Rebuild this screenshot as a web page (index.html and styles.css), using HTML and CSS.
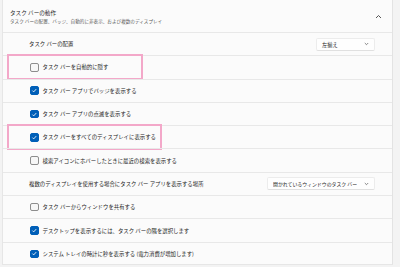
FILE: index.html
```html
<!DOCTYPE html>
<html lang="ja">
<head>
<meta charset="utf-8">
<link rel="stylesheet" href="styles.css">
</head>
<body>
<div class="panel">
  <div class="header">
    <div class="htext">
      <div class="title">タスク バーの動作</div>
      <div class="subtitle">タスク バーの配置、バッジ、自動的に非表示、および複数のディスプレイ</div>
    </div>
    <svg class="chev-up" width="7" height="5" viewBox="0 0 7 5"><path d="M1 4 L3.5 1.5 L6 4" fill="none" stroke="#444" stroke-width="0.9"/></svg>
  </div>
  <div class="row plain">
    <span class="label">タスク バーの配置</span>
    <div class="select s1"><span>左揃え</span><svg width="5" height="4" viewBox="0 0 5 4"><path d="M0.8 1 L2.5 2.7 L4.2 1" fill="none" stroke="#555" stroke-width="0.7"/></svg></div>
  </div>
  <div class="row">
    <span class="hl hl1"></span>
    <span class="cb"></span><span class="label">タスク バーを自動的に隠す</span>
  </div>
  <div class="row">
    <span class="cb on"><svg width="7" height="7" viewBox="0 0 7 7"><path d="M1.5 3.6 L2.9 5 L5.6 2" fill="none" stroke="#fff" stroke-width="0.9"/></svg></span><span class="label">タスク バー アプリでバッジを表示する</span>
  </div>
  <div class="row">
    <span class="cb on"><svg width="7" height="7" viewBox="0 0 7 7"><path d="M1.5 3.6 L2.9 5 L5.6 2" fill="none" stroke="#fff" stroke-width="0.9"/></svg></span><span class="label">タスク バー アプリの点滅を表示する</span>
  </div>
  <div class="row">
    <span class="hl hl2"></span>
    <span class="cb on"><svg width="7" height="7" viewBox="0 0 7 7"><path d="M1.5 3.6 L2.9 5 L5.6 2" fill="none" stroke="#fff" stroke-width="0.9"/></svg></span><span class="label">タスク バーをすべてのディスプレイに表示する</span>
  </div>
  <div class="row">
    <span class="cb"></span><span class="label">検索アイコンにホバーしたときに最近の検索を表示する</span>
  </div>
  <div class="row plain">
    <span class="label">複数のディスプレイを使用する場合にタスク バー アプリを表示する場所</span>
    <div class="select s2"><span class="stext">開かれているウィンドウのタスク バー</span><svg width="5" height="4" viewBox="0 0 5 4"><path d="M0.8 1 L2.5 2.7 L4.2 1" fill="none" stroke="#555" stroke-width="0.7"/></svg></div>
  </div>
  <div class="row">
    <span class="cb"></span><span class="label">タスク バーからウィンドウを共有する</span>
  </div>
  <div class="row">
    <span class="cb on"><svg width="7" height="7" viewBox="0 0 7 7"><path d="M1.5 3.6 L2.9 5 L5.6 2" fill="none" stroke="#fff" stroke-width="0.9"/></svg></span><span class="label">デスクトップを表示するには、タスク バーの隅を選択します</span>
  </div>
  <div class="row">
    <span class="cb on"><svg width="7" height="7" viewBox="0 0 7 7"><path d="M1.5 3.6 L2.9 5 L5.6 2" fill="none" stroke="#fff" stroke-width="0.9"/></svg></span><span class="label">システム トレイの時計に秒を表示する (電力消費が増加します)</span>
  </div>
</div>
</body>
</html>
```

FILE: styles.css
```css
html, body {
  margin: 0;
  padding: 0;
  background: #f3f3f3;
  width: 400px;
  height: 267px;
  overflow: hidden;
  font-family: "Noto Sans CJK JP", "Noto Sans", sans-serif;
  color: #1b1b1b;
}
.panel {
  margin-left: 2px;
  width: 391px;
  height: 265px;
  background: #fbfbfb;
  border-left: 1px solid #e6e6e6;
  border-right: 1px solid #e3e3e3;
  border-bottom: 1px solid #e6e6e6;
  box-sizing: border-box;
}
.header {
  height: 32px;
  display: flex;
  align-items: center;
  justify-content: space-between;
  padding: 0 10px 0 7px;
  box-sizing: border-box;
}
.htext {
  display: flex;
  flex-direction: column;
  gap: 1px;
  padding-top: 1px;
}
.title {
  font-size: 5.6px;
  line-height: 8px;
}
.subtitle {
  font-size: 4.6px;
  line-height: 6px;
  color: #5c5c5c;
}
.chev-up {
  margin-top: 1px;
}
.row {
  position: relative;
  height: 23.3px;
  border-top: 1px solid #e8e8e8;
  box-sizing: border-box;
  display: flex;
  align-items: center;
  padding-left: 27px;
  font-size: 5.4px;
}
.row.plain {
  padding-left: 26px;
  justify-content: space-between;
  padding-right: 17px;
}
.label {
  white-space: nowrap;
  line-height: 8px;
}
.cb {
  width: 8.5px;
  height: 8.5px;
  box-sizing: border-box;
  border: 0.8px solid #8d8d8d;
  border-radius: 2px;
  background: #f7f7f7;
  margin-right: 4px;
  display: flex;
  align-items: center;
  justify-content: center;
  flex: none;
}
.cb.on {
  background: #005fb8;
  border-color: #005fb8;
}
.select {
  height: 13px;
  box-sizing: border-box;
  background: #fefefe;
  border: 1px solid #ececec;
  border-bottom-color: #e0e0e0;
  border-radius: 2px;
  display: flex;
  align-items: center;
  justify-content: space-between;
  padding: 0 5px 0 5px;
  font-size: 5.2px;
  flex: none;
  white-space: nowrap;
}
.s1 { width: 59px; }
.s2 { width: 108px; }
.stext {
  font-size: 4.9px;
  overflow: hidden;
}
.hl {
  position: absolute;
  left: 4px;
  top: -2px;
  height: 26px;
  box-sizing: border-box;
  border: 2.5px solid #f3a8c9;
}
.hl1 { width: 136px; }
.hl2 { width: 155px; }
```
